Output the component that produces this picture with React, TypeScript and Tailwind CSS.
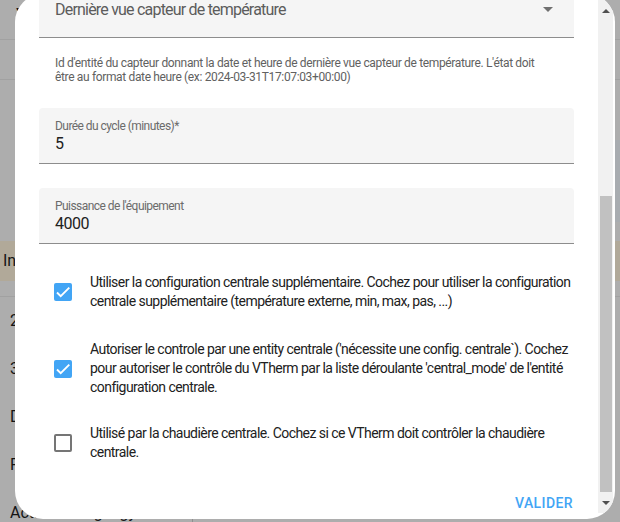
import React from "react";

function Checkbox({ checked }: { checked: boolean }) {
  if (checked) {
    return (
      <div className="w-[18px] h-[18px] rounded-[2px] bg-[#42a5f5] flex items-center justify-center shrink-0">
        <svg width="14" height="14" viewBox="0 0 24 24" fill="none">
          <path d="M1.73 12.91 8.1 19.28 22.79 4.59" stroke="white" strokeWidth="3.2" />
        </svg>
      </div>
    );
  }
  return <div className="w-[18px] h-[18px] rounded-[2px] border-2 border-[#757575] shrink-0" />;
}

function CheckRow({ checked, children, mt }: { checked: boolean; children: React.ReactNode; mt: string }) {
  return (
    <div className={`flex items-center shrink-0 ${mt}`}>
      <div className="pl-[15px]">
        <Checkbox checked={checked} />
      </div>
      <div className="ml-[18px] text-[14px] leading-[19px] tracking-[-0.55px] whitespace-nowrap text-[#212121]">
        {children}
      </div>
    </div>
  );
}

export default function App() {
  return (
    <div className="relative w-[620px] h-[522px] overflow-hidden bg-[#adadad] font-['Roboto',sans-serif]">
      {/* background page (under scrim) */}
      <div className="flex flex-col text-[#141414]">
        <div className="h-[40px] border-b border-[#a1a1a1] pl-[16px] pb-[6px] flex items-center text-[22px]">Versatile Thermostat</div>
        <div className="h-[40px] border-b border-[#a1a1a1]" />
        <div className="h-[60px]" />
        <div className="h-[82px] flex justify-end">
          <div className="w-[80px] bg-[#a8acb0]" />
        </div>
        <div className="h-[19px]" />
        <div className="h-[40px] bg-[#b1a999] pl-[3px] flex items-center text-[16px]">Intégration</div>
        <div className="h-[16px] border-b border-[#a1a1a1]" />
        <div className="flex flex-col pl-[10px] text-[16px]">
          <div className="h-[48px] flex items-center">2</div>
          <div className="h-[48px] flex items-center">3</div>
          <div className="h-[48px] flex items-center">D</div>
          <div className="h-[48px] flex items-center">F</div>
          <div className="h-[48px] flex items-center">
            <div className="w-[183px] border-r border-[#8f8f8f] h-full flex items-center">Activer la régul gy</div>
          </div>
        </div>
      </div>

      {/* dialog */}
      <div className="absolute left-[15px] top-[-6px] w-[600px] h-[525px] bg-white rounded-[28px] overflow-hidden flex">
        <div className="flex-1 px-[24px] flex flex-col overflow-hidden">
          {/* select */}
          <div className="shrink-0 -mt-[12px] h-[56px] bg-[#f5f5f5] border-b border-[#8d8d8d] flex items-center justify-between pl-[16px]">
            <span className="text-[16px] tracking-[-0.8px] text-[#5c5c5c]">Dernière vue capteur de température</span>
            <svg width="10" height="5" viewBox="0 0 10 5" className="mr-[21px]">
              <path d="M0 0 L10 0 L5 5 Z" fill="#707070" />
            </svg>
          </div>
          <div className="shrink-0 mt-[18px] px-[16px] text-[12px] leading-[14px] tracking-[-0.35px] whitespace-nowrap text-[#616161]">
            Id d'entité du capteur donnant la date et heure de dernière vue capteur de température. L'état doit
            <br />
            être au format date heure (ex: 2024-03-31T17:07:03+00:00)
          </div>

          <div className="shrink-0 mt-[24px] h-[56px] bg-[#f5f5f5] rounded-t-[4px] border-b border-[#8d8d8d] px-[16px] pt-[10px]">
            <div className="text-[12px] leading-[16px] tracking-[-0.55px] text-[#6b6b6b]">Durée du cycle (minutes)*</div>
            <div className="text-[16px] leading-[20px] text-[#212121]">5</div>
          </div>

          <div className="shrink-0 mt-[24px] h-[56px] bg-[#f5f5f5] rounded-t-[4px] border-b border-[#8d8d8d] px-[16px] pt-[10px]">
            <div className="text-[12px] leading-[16px] tracking-[-0.55px] text-[#6b6b6b]">Puissance de l'équipement</div>
            <div className="text-[16px] leading-[20px] tracking-[-0.5px] text-[#212121]">4000</div>
          </div>

          <CheckRow checked mt="mt-[29px]">
            Utiliser la configuration centrale supplémentaire. Cochez pour utiliser la configuration
            <br />
            centrale supplémentaire (température externe, min, max, pas, ...)
          </CheckRow>
          <CheckRow checked mt="mt-[29px]">
            Autoriser le controle par une entity centrale ('nécessite une config. centrale`). Cochez
            <br />
            pour autoriser le contrôle du VTherm par la liste déroulante 'central_mode' de l'entité
            <br />
            configuration centrale.
          </CheckRow>
          <CheckRow checked={false} mt="mt-[27px]">
            Utilisé par la chaudière centrale. Cochez si ce VTherm doit contrôler la chaudière
            <br />
            centrale.
          </CheckRow>

          <div className="shrink-0 mt-[23px] h-[36px] flex items-center justify-end pr-[1px]">
            <span className="text-[14px] font-medium tracking-[0.4px] text-[#42a5f5]">VALIDER</span>
          </div>
        </div>

        {/* scrollbar */}
        <div className="shrink-0 w-[15px] h-[519px] mr-[2px] bg-[#f1f1f1] flex flex-col items-center">
          <svg width="8" height="4" viewBox="0 0 8 4" className="mt-[15px] shrink-0">
            <path d="M0 4 L8 4 L4 0 Z" fill="#505050" />
          </svg>
          <div className="shrink-0 mt-[183px] w-[12px] ml-[1px] h-[296px] bg-[#c1c1c1]" />
          <svg width="8" height="4" viewBox="0 0 8 4" className="mt-[9px] shrink-0">
            <path d="M0 0 L8 0 L4 4 Z" fill="#505050" />
          </svg>
        </div>
      </div>
    </div>
  );
}
